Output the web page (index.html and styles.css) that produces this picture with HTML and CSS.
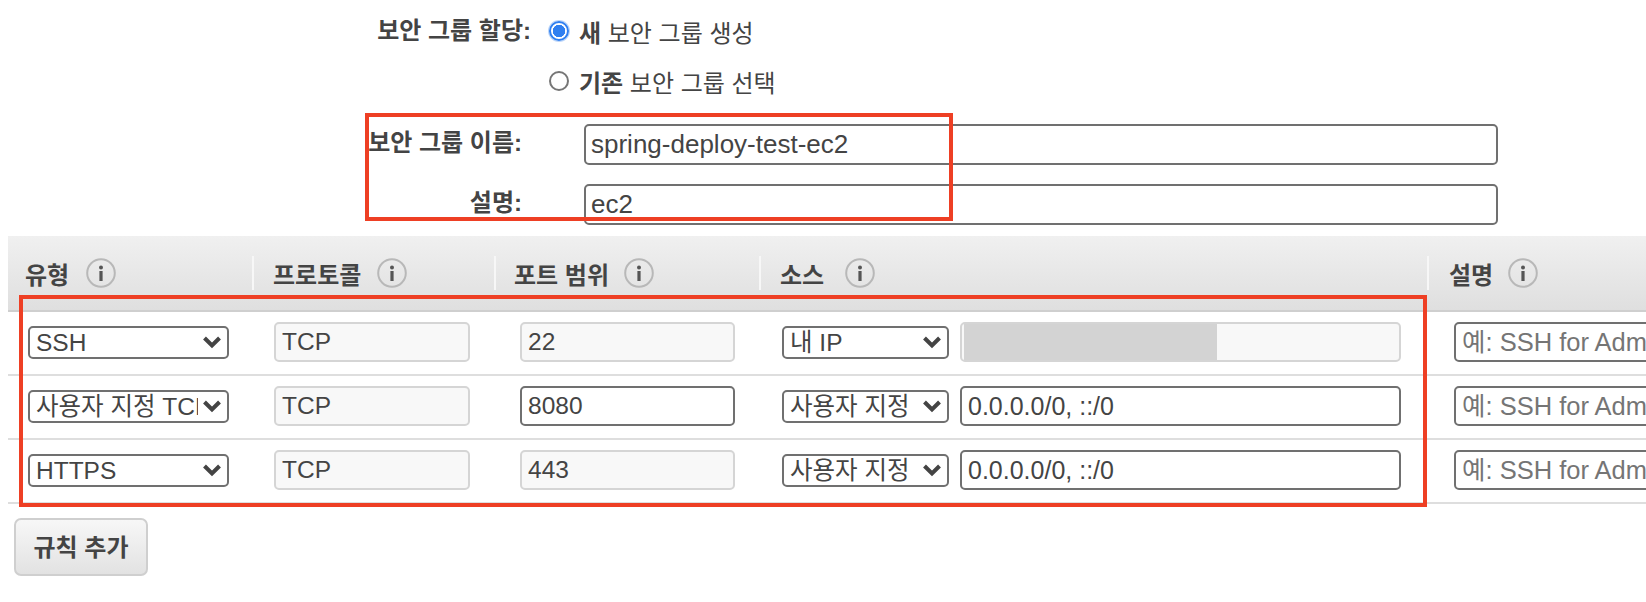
FILE: index.html
```html
<!DOCTYPE html>
<html lang="ko">
<head>
    <title>보안 그룹</title>
    <link rel="stylesheet" href="styles.css">
</head>
<body>
    <div class="page">
        <svg width="0" height="0" class="defs">
            <symbol id="info" viewBox="0 0 30 30">
                <circle cx="15" cy="15" r="13.8" fill="none" stroke="#b8b8b8" stroke-width="2"/>
                <circle cx="15" cy="9.5" r="2" fill="#555"/>
                <rect x="13.4" y="13" width="3.2" height="10" fill="#555"/>
            </symbol>
            <symbol id="chevron" viewBox="0 0 20 14">
                <path d="M2.5 3 L10 10.5 L17.5 3" fill="none" stroke="#444" stroke-width="4"/>
            </symbol>
        </svg>

        <div class="assign">
            <div class="field-label">보안 그룹 할당:</div>
            <label class="radio-line"><input type="radio" name="sg" checked><span><b>새</b> 보안 그룹 생성</span></label>
            <div></div>
            <label class="radio-line"><input type="radio" name="sg"><span><b>기존</b> 보안 그룹 선택</span></label>
        </div>

        <div class="group-form">
            <div class="field-label">보안 그룹 이름:</div>
            <input class="text-input" value="spring-deploy-test-ec2">
            <div class="field-label">설명:</div>
            <input class="text-input" value="ec2">
        </div>

        <div class="rules">
            <div class="rule-row rule-head">
                <div class="cell">유형 <svg class="info-icon"><use href="#info"/></svg></div>
                <div class="cell">프로토콜 <svg class="info-icon"><use href="#info"/></svg></div>
                <div class="cell">포트 범위 <svg class="info-icon"><use href="#info"/></svg></div>
                <div class="cell">소스 <svg class="info-icon"><use href="#info"/></svg></div>
                <div class="cell">설명 <svg class="info-icon"><use href="#info"/></svg></div>
            </div>

            <div class="rule-row">
                <div class="cell">
                    <div class="select-wrap type-select"><select><option>SSH</option></select><svg class="chevron"><use href="#chevron"/></svg></div>
                </div>
                <div class="cell"><input class="row-input proto-input" value="TCP" disabled></div>
                <div class="cell"><input class="row-input port-input" value="22" disabled></div>
                <div class="cell">
                    <div class="select-wrap source-select"><select><option>내 IP</option></select><svg class="chevron"><use href="#chevron"/></svg></div>
                    <div class="masked-ip"><div class="mask-bar"></div></div>
                </div>
                <div class="cell"><input class="row-input desc-input" placeholder="예: SSH for Admin Desktop"></div>
            </div>

            <div class="rule-row">
                <div class="cell">
                    <div class="select-wrap type-select"><select><option>사용자 지정 TCP</option></select><svg class="chevron"><use href="#chevron"/></svg></div>
                </div>
                <div class="cell"><input class="row-input proto-input" value="TCP" disabled></div>
                <div class="cell"><input class="row-input port-input active" value="8080"></div>
                <div class="cell">
                    <div class="select-wrap source-select"><select><option>사용자 지정</option></select><svg class="chevron"><use href="#chevron"/></svg></div>
                    <input class="row-input source-input" value="0.0.0.0/0, ::/0">
                </div>
                <div class="cell"><input class="row-input desc-input" placeholder="예: SSH for Admin Desktop"></div>
            </div>

            <div class="rule-row">
                <div class="cell">
                    <div class="select-wrap type-select"><select><option>HTTPS</option></select><svg class="chevron"><use href="#chevron"/></svg></div>
                </div>
                <div class="cell"><input class="row-input proto-input" value="TCP" disabled></div>
                <div class="cell"><input class="row-input port-input" value="443" disabled></div>
                <div class="cell">
                    <div class="select-wrap source-select"><select><option>사용자 지정</option></select><svg class="chevron"><use href="#chevron"/></svg></div>
                    <input class="row-input source-input" value="0.0.0.0/0, ::/0">
                </div>
                <div class="cell"><input class="row-input desc-input" placeholder="예: SSH for Admin Desktop"></div>
            </div>
        </div>

        <button class="add-rule">규칙 추가</button>

        <!-- red annotation boxes drawn over the form -->
        <div class="callout callout-name"></div>
        <div class="callout callout-rules"></div>
    </div>
</body>
</html>
```

FILE: styles.css
```css
html, body { margin: 0; padding: 0; background: #fff; }
body { font-family: "Liberation Sans", "Noto Sans CJK KR", sans-serif; color: #444; }
.page { position: relative; width: 1646px; height: 602px; overflow: hidden; }
.defs { display: block; }

.field-label { font-size: 24px; font-weight: 700; text-align: right; color: #444; }

.assign { display: grid; grid-template-columns: 531px 1fr; column-gap: 18px; row-gap: 20px; padding-top: 16px; padding-bottom: 1px; }
.assign .field-label { line-height: 30px; }
.radio-line { display: flex; align-items: center; gap: 10px; height: 30px; font-size: 24px; }
.radio-line input { appearance: none; width: 20px; height: 20px; margin: 0; background: #fff; border: 2px solid #767676; border-radius: 50%; }
.radio-line input:checked { border-color: #2f7ff0; background: radial-gradient(circle, #2f7ff0 0 6px, #fff 6.5px); box-shadow: 0 0 0 1px #bcd6fa; }

.group-form { display: grid; grid-template-columns: 522px 914px; column-gap: 62px; row-gap: 19px; margin-top: 27px; }
.group-form .field-label { line-height: 37px; }
.text-input { box-sizing: border-box; height: 41px; padding: 0 5px; font: 26px "Liberation Sans", "Noto Sans CJK KR", sans-serif; color: #444; background: #fff; border: 2px solid #707070; border-radius: 5px; }

.rules { margin: 11px 0 0 8px; width: 1800px; }
.rule-row { display: grid; grid-template-columns: 244px 242px 265px 668px 381px; align-items: start; height: 62px; border-bottom: 2px solid #dedede; }
.rule-head { height: 74px; background: linear-gradient(#f0f0f0, #dfdfdf); border-bottom: 2px solid #cfcfcf; }
.cell { display: flex; align-items: center; height: 40px; margin-top: 10px; }
.rule-row .cell:nth-child(1) { padding-left: 20px; }
.rule-row .cell:nth-child(2) { padding-left: 22px; }
.rule-row .cell:nth-child(3) { padding-left: 26px; }
.rule-row .cell:nth-child(4) { padding-left: 23px; gap: 11px; }
.rule-row .cell:nth-child(5) { padding-left: 27px; }

.rule-head .cell { height: 34px; margin-top: 20px; font-size: 24px; font-weight: 700; border-left: 2px solid #f7f7f7; }
.rule-head .cell:first-child { border-left: 0; }
.rule-head .cell:nth-child(1) { padding-left: 17px; gap: 17px; }
.rule-head .cell:nth-child(2) { padding-left: 19px; gap: 16px; }
.rule-head .cell:nth-child(3) { padding-left: 18px; gap: 15px; }
.rule-head .cell:nth-child(4) { padding-left: 19px; gap: 21px; }
.rule-head .cell:nth-child(5) { padding-left: 20px; gap: 15px; }
.info-icon { width: 30px; height: 30px; }

.select-wrap { position: relative; height: 33px; }
.select-wrap select { appearance: none; box-sizing: border-box; width: 100%; height: 100%; padding: 0 29px 0 6px; font: 24.5px "Liberation Sans", "Noto Sans CJK KR", sans-serif; color: #444; background: #fff; border: 2px solid #707070; border-radius: 5px; }
.chevron { position: absolute; right: 7px; top: 9px; width: 20px; height: 14px; pointer-events: none; }
.type-select { width: 201px; }
.source-select { width: 167px; }

.row-input { box-sizing: border-box; height: 40px; padding: 0 6px; font: 24.5px "Liberation Sans", "Noto Sans CJK KR", sans-serif; color: #444; background: #fff; border: 2px solid #707070; border-radius: 5px; }
.row-input:disabled { color: #444; background: #f8f8f8; border-color: #d5d5d5; opacity: 1; }
.row-input::placeholder { color: #757575; opacity: 1; }
.proto-input { width: 196px; }
.port-input { width: 215px; }
.source-input { width: 441px; font-size: 25px; }
.desc-input { width: 320px; font-size: 25.5px; }

.masked-ip { box-sizing: border-box; width: 441px; height: 40px; background: #f8f8f8; border: 2px solid #d5d5d5; border-radius: 5px; }
.mask-bar { width: 253px; height: 100%; margin-left: 2px; background: #d3d3d3; }

.add-rule { display: block; box-sizing: border-box; width: 134px; height: 58px; margin: 14px 0 0 14px; padding: 0 0 4px; font: 700 24px "Liberation Sans", "Noto Sans CJK KR", sans-serif; color: #444; background: linear-gradient(#f7f7f7, #e2e2e2); border: 2px solid #cfcfcf; border-radius: 7px; }

.callout { position: absolute; box-sizing: border-box; border: 4px solid #ee3f24; pointer-events: none; }
.callout-name { left: 365px; top: 113px; width: 588px; height: 108px; }
.callout-rules { left: 19px; top: 295px; width: 1408px; height: 212px; }
```
